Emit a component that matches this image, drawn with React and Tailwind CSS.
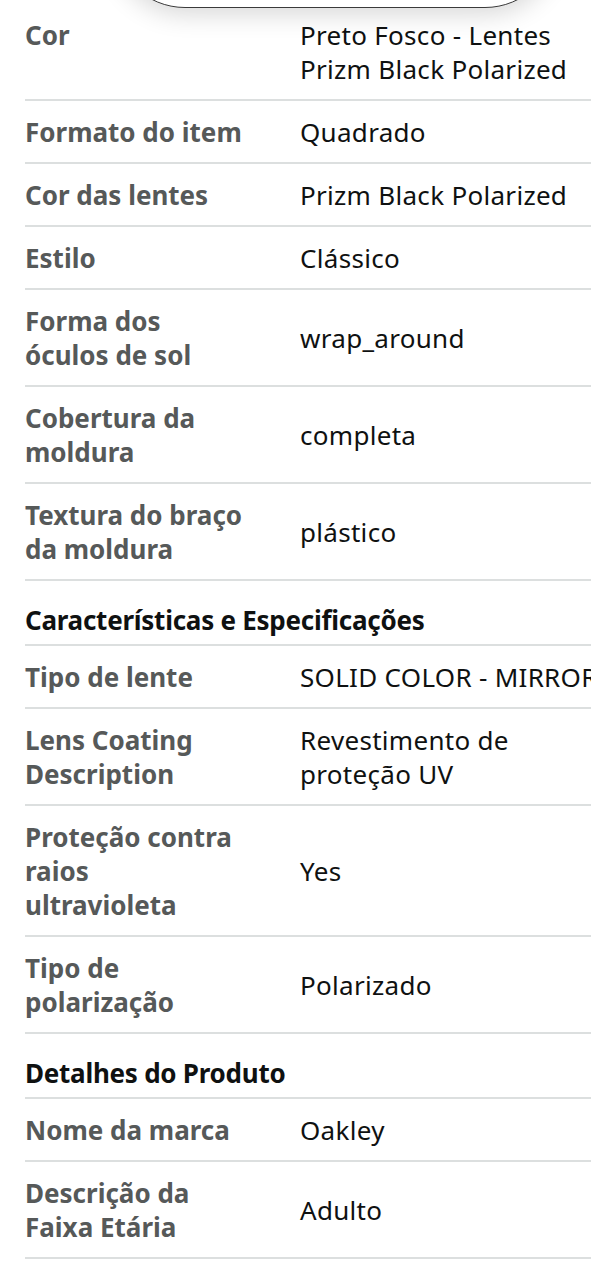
import React from "react";

const font = { fontFamily: '"Noto Sans", "Open Sans", Arial, sans-serif' };

// label / value pairs, arrays mean forced line breaks
const sections = [
  {
    title: null,
    rows: [
      { label: ["Cor"], value: ["Preto Fosco - Lentes", "Prizm Black Polarized"], top: true },
      { label: ["Formato do item"], value: ["Quadrado"] },
      { label: ["Cor das lentes"], value: ["Prizm Black Polarized"] },
      { label: ["Estilo"], value: ["Clássico"] },
      { label: ["Forma dos", "óculos de sol"], value: ["wrap_around"] },
      { label: ["Cobertura da", "moldura"], value: ["completa"] },
      { label: ["Textura do braço", "da moldura"], value: ["plástico"] },
    ],
  },
  {
    title: "Características e Especificações",
    rows: [
      { label: ["Tipo de lente"], value: ["SOLID COLOR - MIRROR"] },
      { label: ["Lens Coating", "Description"], value: ["Revestimento de", "proteção UV"] },
      { label: ["Proteção contra", "raios", "ultravioleta"], value: ["Yes"] },
      { label: ["Tipo de", "polarização"], value: ["Polarizado"] },
    ],
  },
  {
    title: "Detalhes do Produto",
    rows: [
      { label: ["Nome da marca"], value: ["Oakley"] },
      { label: ["Descrição da", "Faixa Etária"], value: ["Adulto"] },
    ],
  },
];

const Lines = ({ lines }) =>
  lines.map((l, i) => (
    <span key={i} className="block whitespace-nowrap">
      {l}
    </span>
  ));

const Row = ({ row }) => (
  <div
    className={`grid grid-cols-[275px_1fr] ${
      row.top ? "items-start" : "items-center"
    } pt-[14px] pb-[13px] border-b-2 border-[#dcdfdf]`}
  >
    <div className="font-bold text-[#565959]">
      <Lines lines={row.label} />
    </div>
    <div className="text-[#0f1111] tracking-[0.3px]">
      <Lines lines={row.value} />
    </div>
  </div>
);

export default function App() {
  return (
    <div
      className="relative w-[591px] h-[1280px] overflow-hidden bg-white text-[26px] leading-[34px]"
      style={font}
    >
      {/* floating button edge peeking at the top */}
      <div className="absolute left-[113px] w-[444px] top-[-142px] h-[150px] rounded-[72px] border-[1.5px] border-[#3a3a3a] bg-white shadow-[0_6px_26px_rgba(0,0,0,0.16)] z-10" />

      <div className="ml-[25px] pt-[4px]">
        {sections.map((s, i) => (
          <div key={i}>
            {s.title && (
              <div className="pt-[22px] pb-[7px] border-b-2 border-[#dcdfdf] font-bold text-[#0f1111] tracking-[-0.25px] whitespace-nowrap">
                {s.title}
              </div>
            )}
            {s.rows.map((r, j) => (
              <Row key={j} row={r} />
            ))}
          </div>
        ))}
      </div>
    </div>
  );
}
